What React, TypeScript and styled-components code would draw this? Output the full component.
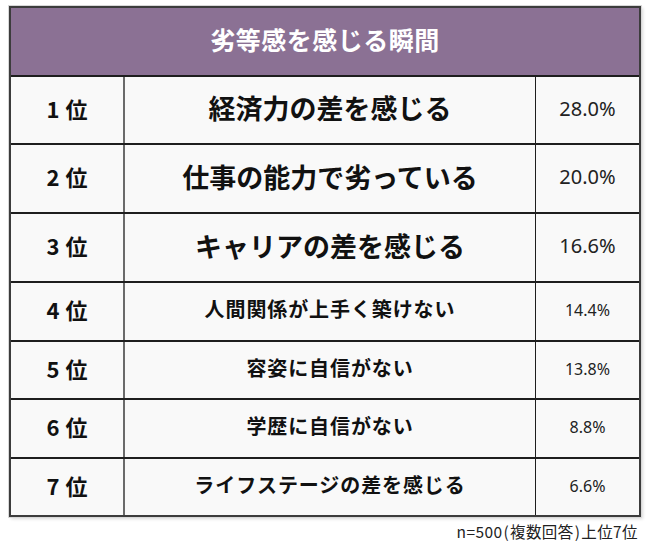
import React from "react";
import styled, { createGlobalStyle } from "styled-components";

const Global = createGlobalStyle`
  html, body { margin: 0; padding: 0; background: #ffffff; }
  body { font-family: "Noto Sans CJK JP", "Noto Sans", sans-serif; }
`;

const Page = styled.div`
  width: 650px;
  height: 543px;
  box-sizing: border-box;
  padding: 6px 9px 0 9px;
  display: flex;
  flex-direction: column;
`;

const Table = styled.div`
  width: 632px;
  box-sizing: border-box;
  border: 2px solid #3c3c3c;
  box-shadow: 0 0 0 1px #d8d8d8, 2px 2px 3px rgba(0, 0, 0, 0.15);
  background: #f9f9f9;
  display: flex;
  flex-direction: column;
`;

const Header = styled.div`
  height: 67px;
  box-sizing: border-box;
  padding-bottom: 5px;
  background: #8b7194;
  color: #ffffff;
  display: flex;
  align-items: center;
  justify-content: center;
  font-weight: 700;
  font-size: 25px;
  line-height: 1;
  letter-spacing: 0.5px;
`;

const Row = styled.div<{ $h: number }>`
  height: ${(p) => p.$h}px;
  box-sizing: border-box;
  border-top: 2px solid #1e1e1e;
  display: grid;
  grid-template-columns: 112px 412px 1fr;
`;

const Cell = styled.div`
  display: flex;
  align-items: center;
  justify-content: center;
  box-sizing: border-box;
  padding-bottom: 5px;
  line-height: 1;
  color: #111;
`;

const RankCell = styled(Cell)`
  font-weight: 700;
  font-size: 22px;
  gap: 6px;
`;

const LabelCell = styled(Cell)<{ $big: boolean }>`
  border-left: 2px solid #6a6a6a;
  font-weight: 700;
  font-size: ${(p) => (p.$big ? 27 : 20)}px;
  letter-spacing: ${(p) => (p.$big ? 0 : 0.9)}px;
`;

const PctCell = styled(Cell)<{ $big: boolean }>`
  border-left: 1.5px solid #1e1e1e;
  padding-bottom: 3px;
  font-family: "Noto Sans", sans-serif;
  font-size: ${(p) => (p.$big ? 20 : 16)}px;
  color: #222;
`;

const Footer = styled.div`
  width: 632px;
  text-align: right;
  font-size: 15.5px;
  line-height: 1;
  letter-spacing: 0.4px;
  color: #222;
  margin-top: 7px;
  padding-right: 3px;
  box-sizing: border-box;
`;

const Paren = styled.span`
  margin: 0 1px;
`;

const rows = [
  { rank: "1", label: "経済力の差を感じる", pct: "28.0%", big: true, h: 68 },
  { rank: "2", label: "仕事の能力で劣っている", pct: "20.0%", big: true, h: 69 },
  { rank: "3", label: "キャリアの差を感じる", pct: "16.6%", big: true, h: 69 },
  { rank: "4", label: "人間関係が上手く築けない", pct: "14.4%", big: false, h: 59 },
  { rank: "5", label: "容姿に自信がない", pct: "13.8%", big: false, h: 58 },
  { rank: "6", label: "学歴に自信がない", pct: "8.8%", big: false, h: 59 },
  { rank: "7", label: "ライフステージの差を感じる", pct: "6.6%", big: false, h: 58 },
];

export default function App() {
  return (
    <Page>
      <Global />
      <Table>
        <Header>劣等感を感じる瞬間</Header>
        {rows.map((r) => (
          <Row key={r.rank} $h={r.h}>
            <RankCell>
              <span>{r.rank}</span>
              <span>位</span>
            </RankCell>
            <LabelCell $big={r.big}>{r.label}</LabelCell>
            <PctCell $big={r.big}>{r.pct}</PctCell>
          </Row>
        ))}
      </Table>
      <Footer>
        n=500<Paren>(</Paren>複数回答<Paren>)</Paren>上位7位
      </Footer>
    </Page>
  );
}
